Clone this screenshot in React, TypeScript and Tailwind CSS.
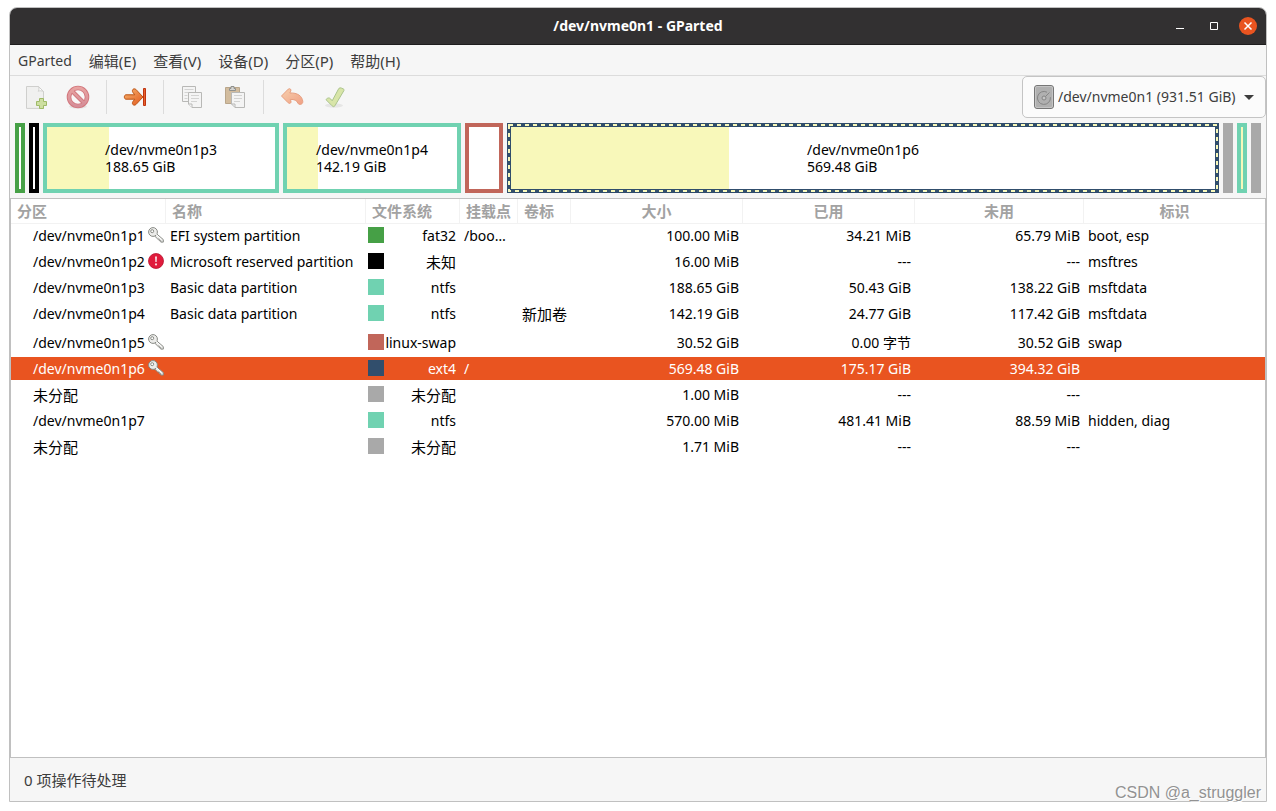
import type { ReactNode } from "react";
import clsx from "clsx";

type Partition = {
  name: string;
  icon?: "key" | "warning";
  label?: string;
  color: string;
  fs: string;
  mount?: string;
  volume?: string;
  size: string;
  used: string;
  unused: string;
  flags?: string;
  selected?: boolean;
};

const partitions: Partition[] = [
  { name: "/dev/nvme0n1p1", icon: "key", label: "EFI system partition", color: "bg-[#46a046]", fs: "fat32", mount: "/boo…", size: "100.00 MiB", used: "34.21 MiB", unused: "65.79 MiB", flags: "boot, esp" },
  { name: "/dev/nvme0n1p2", icon: "warning", label: "Microsoft reserved partition", color: "bg-black", fs: "未知", size: "16.00 MiB", used: "---", unused: "---", flags: "msftres" },
  { name: "/dev/nvme0n1p3", label: "Basic data partition", color: "bg-[#70d2b1]", fs: "ntfs", size: "188.65 GiB", used: "50.43 GiB", unused: "138.22 GiB", flags: "msftdata" },
  { name: "/dev/nvme0n1p4", label: "Basic data partition", color: "bg-[#70d2b1]", fs: "ntfs", volume: "新加卷", size: "142.19 GiB", used: "24.77 GiB", unused: "117.42 GiB", flags: "msftdata" },
  { name: "/dev/nvme0n1p5", icon: "key", color: "bg-[#c1665a]", fs: "linux-swap", size: "30.52 GiB", used: "0.00 字节", unused: "30.52 GiB", flags: "swap" },
  { name: "/dev/nvme0n1p6", icon: "key", color: "bg-[#314e6c]", fs: "ext4", mount: "/", size: "569.48 GiB", used: "175.17 GiB", unused: "394.32 GiB", selected: true },
  { name: "未分配", color: "bg-[#a9a9a9]", fs: "未分配", size: "1.00 MiB", used: "---", unused: "---" },
  { name: "/dev/nvme0n1p7", color: "bg-[#70d2b1]", fs: "ntfs", size: "570.00 MiB", used: "481.41 MiB", unused: "88.59 MiB", flags: "hidden, diag" },
  { name: "未分配", color: "bg-[#a9a9a9]", fs: "未分配", size: "1.71 MiB", used: "---", unused: "---" },
];

const menus = ["GParted", "编辑(E)", "查看(V)", "设备(D)", "分区(P)", "帮助(H)"];

const columns = [
  { title: "分区", width: "w-[155px]" },
  { title: "名称", width: "w-[200px]" },
  { title: "文件系统", width: "w-[94px]" },
  { title: "挂载点", width: "w-[58px]" },
  { title: "卷标", width: "w-[53px]" },
  { title: "大小", width: "w-[172px]", center: true },
  { title: "已用", width: "w-[172px]", center: true },
  { title: "未用", width: "w-[169px]", center: true },
  { title: "标识", width: "", center: true },
];

// Chinese text is set one pixel larger than Latin text
const cjk = (text: string) => /[\u4e00-\u9fff]/.test(text) && "text-[15px]";

function KeyIcon() {
  return (
    <svg viewBox="0 0 16 16" className="mt-px size-4 shrink-0">
      <path d="M8.3 6.6 15.3 12.6v2.5h-2.5v-1.4h-1.6v-1.6H9.8L6.4 8.8z" fill="#ececea" stroke="#888a85" strokeWidth="1" strokeLinejoin="round" />
      <circle cx="5" cy="5" r="4.4" fill="#ececea" stroke="#888a85" strokeWidth="1" />
      <circle cx="4.2" cy="4.2" r="1.5" fill="#fff" stroke="#888a85" strokeWidth="1" />
      <path d="m8 7.300 5.500 5" stroke="#fff" strokeWidth="1" />
    </svg>
  );
}

function WarningIcon() {
  return (
    <svg viewBox="0 0 16 16" className="mt-px size-4 shrink-0">
      <circle cx="8" cy="8" r="7.5" fill="#e01b3c" stroke="#b81430" strokeWidth="0.8" />
      <path d="M7 3.5h2l-.3 5.6H7.3z" fill="#f7d5db" />
      <circle cx="8" cy="11.4" r="1.1" fill="#f7d5db" />
    </svg>
  );
}

function NewIcon() {
  return (
    <svg viewBox="0 0 24 24" className="size-6">
      <path d="M2.5 1.5h12l5 5v16.9h-17z" fill="#f0f0ef" stroke="#cfcfcd" />
      <path d="M14.5 1.5c1 2 .4 3.6-.4 4.7 1.6-.6 3.6-.6 5.4.3z" fill="#fff" stroke="#cfcfcd" />
      <path d="M15.5 13.5h4v3h3v4h-3v3h-4v-3h-3v-4h3z" fill="#cddfa0" stroke="#9fba68" />
    </svg>
  );
}

function DeleteIcon() {
  return (
    <svg viewBox="0 0 24 24" className="size-6">
      <defs>
        <linearGradient id="stop" x1="0" y1="0" x2="0" y2="24" gradientUnits="userSpaceOnUse">
          <stop offset="0" stopColor="#eba6a2" />
          <stop offset="1" stopColor="#d28b98" />
        </linearGradient>
      </defs>
      <ellipse cx="12" cy="21.5" rx="9" ry="2" fill="#e4e4e4" />
      <circle cx="12" cy="12" r="9" fill="#f8f8f8" stroke="#d2777d" strokeWidth="4.6" />
      <path d="m6.5 6.5 11 11" stroke="#d2777d" strokeWidth="4.2" />
      <circle cx="12" cy="12" r="9" fill="none" stroke="url(#stop)" strokeWidth="2.8" />
      <path d="m6 6 12 12" stroke="url(#stop)" strokeWidth="2.4" />
    </svg>
  );
}

function ResizeIcon() {
  return (
    <svg viewBox="0 0 24 24" className="size-6">
      <defs>
        <linearGradient id="resize" x1="0" y1="0" x2="1" y2="1">
          <stop offset="0" stopColor="#f6b570" />
          <stop offset="1" stopColor="#e2581c" />
        </linearGradient>
      </defs>
      <path d="M20.5 3.5h2v17h-2z" fill="#e8622c" stroke="#bf3410" strokeLinejoin="round" />
      <path d="M3 9.800h8.800L9.900 7.400c-1.600-2.400.8-4.600 3-3L20 12l-7.100 7.600c-2.200 1.600-4.600-.6-3-3l1.900-2.400H3c-2.200 0-2.200-4.400 0-4.400z" fill="url(#resize)" stroke="#bc5416" strokeLinejoin="round" />
    </svg>
  );
}

function CopyIcon() {
  return (
    <svg viewBox="0 0 24 24" className="size-6" fill="#f4f4f4" stroke="#b8b8b6">
      <path d="M2.5 1.5h13v15h-13z" />
      <path d="M4.5 4.5h9M4.5 7.5h4M4.5 10.5h3M4.5 13.5h3" stroke="#d3d3d2" />
      <path d="M8.5 7.5h13v15H12l-3.5-3.5z" />
      <path d="M11 10.5h8M11 13.5h8M11 16.5h6" stroke="#d3d3d2" />
      <path d="M8.5 19H12v3.5" />
    </svg>
  );
}

function PasteIcon() {
  return (
    <svg viewBox="0 0 24 24" className="size-6">
      <path d="M2.5 2.5h14v16h-14z" fill="#d2bc9e" stroke="#b9a68b" />
      <path d="M6.5 5.5v-2H8v-2h3v2h1.5v2z" fill="#d4d4d2" stroke="#8f908d" />
      <path d="M8.5 7.5h13v15H12l-3.5-3.5z" fill="#f4f4f4" stroke="#b8b8b6" />
      <path d="M11 10.5h8M11 13.5h8M11 16.5h6" stroke="#d3d3d2" />
      <path d="M8.5 19H12v3.5" fill="none" stroke="#b8b8b6" />
    </svg>
  );
}

function UndoIcon() {
  return (
    <svg viewBox="0 0 24 24" className="size-6">
      <defs>
        <linearGradient id="undo" x1="0" y1="0" x2="1" y2="1">
          <stop offset="0" stopColor="#f7d0ad" />
          <stop offset="1" stopColor="#f0a085" />
        </linearGradient>
      </defs>
      <path d="M1.5 11 8.3 4.1c1.5-1.2 3.4.4 2.4 2.1L9.8 8c7.7-.4 12.4 3 13 8.5.3 3-3.9 4-5 1.5-1-2.7-3.5-3.7-7.5-3.6l.6 1.6c.8 1.9-1.3 3.2-2.7 1.8z" fill="url(#undo)" stroke="#e69f80" strokeLinejoin="round" />
    </svg>
  );
}

function ApplyIcon() {
  return (
    <svg viewBox="0 0 24 24" className="size-6">
      <ellipse cx="11" cy="20.5" rx="9" ry="2.2" fill="#e6e6e5" />
      <path d="M3.3 14.2c1.2-1.3 2.9-1.9 4.2-.4l1.700 2L15.5 4c.8-1.4 2-1.3 3.2-.8l1.900.9c.6.4.6.9.3 1.500l-9 15.200c-.7 1.100-2 1.100-2.800 0l-5.700-5.700c-.3-.3-.3-.6-.1-.9z" fill="#d8e5a8" stroke="#abc48c" strokeLinejoin="round" />
    </svg>
  );
}

function DiskIcon() {
  return (
    <svg viewBox="0 0 20 24" className="h-6 w-5">
      <rect x="0.5" y="0.5" width="19" height="23" rx="2.5" fill="#b0b0b0" stroke="#767676" />
      <rect x="1.5" y="1.5" width="17" height="21" rx="1.5" fill="none" stroke="#c4c4c4" />
      <path d="M13 7.2a6.5 6.5 0 1 0 3.4 5" fill="none" stroke="#858585" />
      <circle cx="10" cy="13" r="2" fill="#c4c4c4" stroke="#858585" />
      <path d="m11.5 11.5 4-4" stroke="#858585" />
    </svg>
  );
}

function ToolButton({ label, children }: { label: string; children: ReactNode }) {
  return (
    <button type="button" aria-label={label} className="flex h-[42px] w-[42px] items-center justify-center">
      {children}
    </button>
  );
}

function Separator() {
  return <div className="mx-[7px] h-[34px] w-px bg-[#dcdcdc]" />;
}

function PartitionBox({ className, used, name, size }: { className: string; used?: string; name?: string; size?: string }) {
  return (
    <div className={clsx("relative flex items-center justify-center border-4 bg-white", className)}>
      {used && <div className={clsx("absolute inset-y-0 left-0 bg-[#f8f8ba]", used)} />}
      {name && (
        <div className="relative leading-[17px] whitespace-nowrap">
          <div>{name}</div>
          <div>{size}</div>
        </div>
      )}
    </div>
  );
}

function PartitionMap() {
  return (
    <div className="flex h-20 gap-1 p-[5px]">
      <PartitionBox className="w-2.5 border-[#46a046]" />
      <PartitionBox className="w-2.5 border-black" />
      <PartitionBox className="flex-[228_1_0%] border-[#70d2b1]" used="w-[27%]" name="/dev/nvme0n1p3" size="188.65 GiB" />
      <PartitionBox className="flex-[170_1_0%] border-[#70d2b1]" used="w-[18%]" name="/dev/nvme0n1p4" size="142.19 GiB" />
      <PartitionBox className="flex-[30_1_0%] border-[#c1665a]" />
      <div className="relative flex flex-[712_1_0%]">
        <PartitionBox className="flex-1 border-[#314e6c]" used="w-[31%]" name="/dev/nvme0n1p6" size="569.48 GiB" />
        <svg className="absolute inset-0 size-full">
          <rect x="2" y="2" className="h-[calc(100%-4px)] w-[calc(100%-4px)]" fill="none" stroke="#f8f8ba" strokeWidth="2" strokeDasharray="4 4" />
        </svg>
      </div>
      <div className="w-2.5 bg-[#a9a9a9]" />
      <PartitionBox className="w-2.5 border-[#70d2b1]" used="w-full" />
      <div className="w-2.5 bg-[#a9a9a9]" />
    </div>
  );
}

function PartitionRow({ p }: { p: Partition }) {
  // the row that holds a volume label is taller than the others
  const cell = clsx(
    "border-transparent bg-clip-padding p-0 whitespace-nowrap",
    p.volume ? "h-[29px] border-b-[6px]" : "h-[26px] border-b-[3px]",
    p.selected && "bg-[#e95420] text-white",
  );

  return (
    <tr aria-selected={!!p.selected}>
      <td className={clsx(cell, cjk(p.name))}>
        <div className="flex items-start justify-between pr-0.5 pl-[22px]">
          {p.name}
          {p.icon === "key" && <KeyIcon />}
          {p.icon === "warning" && <WarningIcon />}
        </div>
      </td>
      <td className={clsx(cell, "pl-1")}>{p.label}</td>
      <td className={cell}>
        <div className="flex items-start justify-between pr-1 pl-0.5">
          <span className={clsx("mt-px size-4 shrink-0", p.color)} />
          <span className={clsx(cjk(p.fs))}>{p.fs}</span>
        </div>
      </td>
      <td className={clsx(cell, "pl-1")}>{p.mount}</td>
      <td className={clsx(cell, "pl-1 text-[15px]")}>{p.volume}</td>
      <td className={clsx(cell, "pr-1 text-right")}>{p.size}</td>
      <td className={clsx(cell, "pr-1 text-right")}>{p.used}</td>
      <td className={clsx(cell, "pr-1 text-right")}>{p.unused}</td>
      <td className={clsx(cell, "pl-1")}>{p.flags}</td>
    </tr>
  );
}

export default function App() {
  return (
    <div className="relative flex min-h-screen flex-col bg-white px-[9px] pt-[7px] pb-[9px] font-['Noto_Sans','Noto_Sans_CJK_SC',sans-serif] text-[14px] leading-5 text-black">
      <div className="flex flex-1 flex-col overflow-hidden rounded-t-lg border border-[#c0c0c0] bg-[#f6f6f6]">
        {/* Title bar */}
        <header className="grid h-[37px] grid-cols-[1fr_auto_1fr] items-center border-b border-[#1e1d1e] bg-[#323031] text-white">
          <h1 className="col-start-2 font-bold">/dev/nvme0n1 - GParted</h1>
          <div className="flex items-center justify-end gap-4 pr-[9px]">
            <button type="button" aria-label="Minimize" className="flex size-[18px] items-center justify-center">
              <svg viewBox="0 0 18 18" className="size-[18px]"><path d="M5 11.5h8" stroke="#fff" /></svg>
            </button>
            <button type="button" aria-label="Maximize" className="flex size-[18px] items-center justify-center">
              <svg viewBox="0 0 18 18" className="size-[18px]"><path d="M5.5 5.5h7v7h-7z" fill="none" stroke="#fff" /></svg>
            </button>
            <button type="button" aria-label="Close" className="flex size-[18px] items-center justify-center rounded-full bg-[#e95420]">
              <svg viewBox="0 0 18 18" className="size-[18px]"><path d="m5.5 5.5 7 7m0-7-7 7" stroke="#fff" strokeWidth="1.5" /></svg>
            </button>
          </div>
        </header>

        {/* Menu bar */}
        <nav className="flex h-[31px] items-center gap-px border-b border-[#dcdcdc] pt-0.5 text-[#3d3d3d]">
          {menus.map((menu) => (
            <button key={menu} type="button" className={clsx("px-2", cjk(menu))}>{menu}</button>
          ))}
        </nav>

        {/* Toolbar */}
        <div className="flex h-[42px] items-center justify-between">
          <div className="flex items-center pl-[5px]">
            <ToolButton label="New"><NewIcon /></ToolButton>
            <ToolButton label="Delete"><DeleteIcon /></ToolButton>
            <Separator />
            <ToolButton label="Resize/Move"><ResizeIcon /></ToolButton>
            <Separator />
            <div className="flex gap-px">
              <ToolButton label="Copy"><CopyIcon /></ToolButton>
              <ToolButton label="Paste"><PasteIcon /></ToolButton>
            </div>
            <Separator />
            <div className="flex gap-px">
              <ToolButton label="Undo"><UndoIcon /></ToolButton>
              <ToolButton label="Apply"><ApplyIcon /></ToolButton>
            </div>
          </div>
          <div className="relative">
            <select aria-label="Device" className="h-[42px] w-[244px] appearance-none rounded-[5px] border border-[#c4c4c4] bg-[#fbfbfb] pr-6 pl-[35px] text-[#3d3d3d]">
              <option>/dev/nvme0n1 (931.51 GiB)</option>
            </select>
            <div className="pointer-events-none absolute inset-y-0 left-3 flex items-center"><DiskIcon /></div>
            <div className="pointer-events-none absolute inset-y-0 right-3 flex items-center">
              <svg viewBox="0 0 10 5" className="h-[5px] w-2.5"><path d="M0 0h10L5 5z" fill="#3d3d3d" /></svg>
            </div>
          </div>
        </div>

        <PartitionMap />

        {/* Partition list */}
        <main className="flex-1 border border-[#c0c0c0] bg-white">
          <table className="w-full table-fixed border-separate border-spacing-0">
            <thead>
              <tr>
                {columns.map((col) => (
                  <th
                    key={col.title}
                    scope="col"
                    className={clsx(
                      "h-[25px] border-b border-[#f2f2f2] px-1.5 py-0 text-[15px] font-bold whitespace-nowrap text-[#a2a2a2] not-last:border-r",
                      col.width,
                      col.center ? "text-center" : "text-left",
                    )}
                  >
                    {col.title}
                  </th>
                ))}
              </tr>
            </thead>
            <tbody>
              {partitions.map((p, i) => (
                <PartitionRow key={i} p={p} />
              ))}
            </tbody>
          </table>
        </main>

        <footer className="flex h-[43px] items-center px-3.5 text-[15px] text-[#3d3d3d]">0 项操作待处理</footer>
      </div>
      <div className="absolute right-[15px] bottom-2 font-['Liberation_Sans',sans-serif] text-[16px] text-[#929292] text-shadow-[1px_1px_0_#ffffff]">
        CSDN @a_struggler
      </div>
    </div>
  );
}
